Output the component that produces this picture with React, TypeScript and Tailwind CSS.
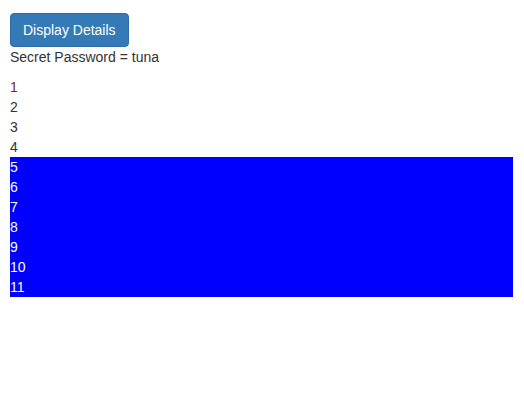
import React from "react"

const rows = [1, 2, 3, 4, 5, 6, 7, 8, 9, 10, 11]

export default function App() {
    return (
        <div className="pt-[13px] pl-[10px] pr-[11px] text-[14px] leading-[20px] text-[#333] font-['Liberation_Sans',Arial,sans-serif]">
            <button
                type="button"
                className="block rounded-[4px] border border-[#2e6da4] bg-[#337ab7] px-[12px] py-[6px] text-[14px] leading-[20px] text-white"
            >
                Display Details
            </button>
            <p className="mb-[10px]">Secret Password = tuna</p>
            <div>
                {rows.map((n) => (
                    <div
                        key={n}
                        className={n === 1 ? "text-[#8b1a1a]" : n >= 5 ? "bg-[#0000ff] text-white" : ""}
                    >
                        {n}
                    </div>
                ))}
            </div>
        </div>
    )
}
